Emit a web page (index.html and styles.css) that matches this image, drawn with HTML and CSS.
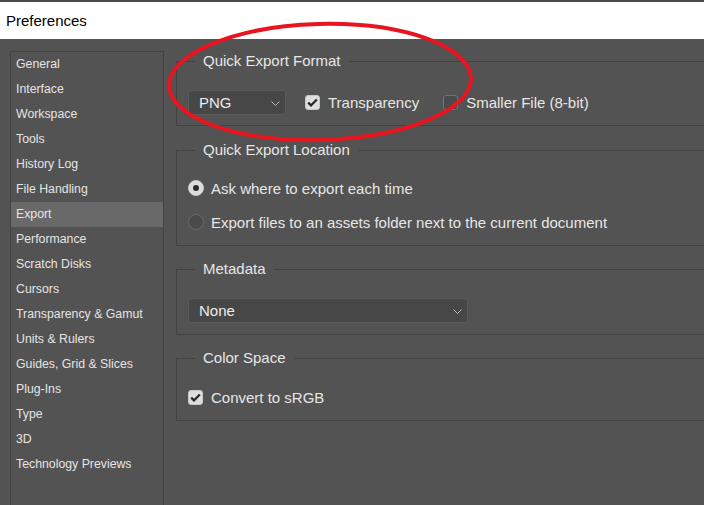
FILE: index.html
```html
<!DOCTYPE html>
<html>
<head>
<meta charset="utf-8">
<link rel="stylesheet" href="styles.css">
</head>
<body>
<div class="titlebar">Preferences</div>
<div class="main">
  <ul class="sidebar">
    <li>General</li>
    <li>Interface</li>
    <li>Workspace</li>
    <li>Tools</li>
    <li>History Log</li>
    <li>File Handling</li>
    <li class="active">Export</li>
    <li>Performance</li>
    <li>Scratch Disks</li>
    <li>Cursors</li>
    <li>Transparency &amp; Gamut</li>
    <li>Units &amp; Rulers</li>
    <li>Guides, Grid &amp; Slices</li>
    <li>Plug-Ins</li>
    <li>Type</li>
    <li>3D</li>
    <li>Technology Previews</li>
  </ul>
  <div class="content">
    <fieldset class="group g1">
      <legend>Quick Export Format</legend>
      <div class="row">
        <div class="select small"><span>PNG</span><svg class="chev" width="9" height="5" viewBox="0 0 9 5"><path d="M0.5 0.5 L4.5 4.5 L8.5 0.5" fill="none" stroke="#b8b8b8" stroke-width="1"/></svg></div>
        <label class="check"><span class="box on"><svg width="11" height="9" viewBox="0 0 11 9"><path d="M1.2 4.6 L4 7.4 L9.8 1.4" fill="none" stroke="#262626" stroke-width="2.2"/></svg></span>Transparency</label>
        <label class="check"><span class="box"></span>Smaller File (8-bit)</label>
      </div>
    </fieldset>
    <fieldset class="group g2">
      <legend>Quick Export Location</legend>
      <label class="radio"><span class="dot on"></span>Ask where to export each time</label>
      <label class="radio second"><span class="dot"></span>Export files to an assets folder next to the current document</label>
    </fieldset>
    <fieldset class="group g3">
      <legend>Metadata</legend>
      <div class="select wide"><span>None</span><svg class="chev" width="9" height="5" viewBox="0 0 9 5"><path d="M0.5 0.5 L4.5 4.5 L8.5 0.5" fill="none" stroke="#b8b8b8" stroke-width="1"/></svg></div>
    </fieldset>
    <fieldset class="group g4">
      <legend>Color Space</legend>
      <label class="check"><span class="box on"><svg width="11" height="9" viewBox="0 0 11 9"><path d="M1.2 4.6 L4 7.4 L9.8 1.4" fill="none" stroke="#262626" stroke-width="2.2"/></svg></span>Convert to sRGB</label>
    </fieldset>
  </div>
</div>
<svg class="annotation" width="704" height="505" viewBox="0 0 704 505">
  <ellipse cx="320" cy="82" rx="151" ry="58" transform="rotate(-1.5 320 82)" fill="none" stroke="#e8141f" stroke-width="4"/>
</svg>
</body>
</html>
```
FILE: styles.css
```css
html, body {
  margin: 0;
  padding: 0;
  overflow: hidden;
  width: 704px;
  height: 505px;
}
body {
  background: #535353;
  font-family: "Liberation Sans", Arial, sans-serif;
  color: #e6e6e6;
  position: relative;
  border-top: 2px solid #4a4a4a;
  box-sizing: border-box;
}
.titlebar {
  background: #ffffff;
  color: #000;
  height: 37px;
  line-height: 37px;
  padding-left: 6px;
  font-size: 15px;
}
.main {
  display: flex;
  padding: 12px 0 0 10px;
}
.sidebar {
  list-style: none;
  margin: 0;
  padding: 0;
  width: 152px;
  height: 480px;
  border: 1px solid #434343;
  border-bottom: none;
  flex: none;
}
.sidebar li {
  height: 25px;
  line-height: 25px;
  padding-left: 5px;
  font-size: 12.3px;
  color: #e4e4e4;
}
.sidebar li.active {
  background: #696969;
}
.content {
  flex: 1;
  margin-left: 12px;
  margin-right: -30px;
  display: flex;
  flex-direction: column;
}
.group {
  border: 1px solid #424242;
  margin: 0;
  padding: 0 11px;
  min-width: 0;
}
.group legend {
  font-size: 15px;
  line-height: 18px;
  margin-left: 7px;
  padding: 0 8px;
  color: #e6e6e6;
}
.g1 { margin-top: 1px; padding-top: 20px; padding-bottom: 10px; }
.g2 { margin-top: 15px; padding-top: 19px; padding-bottom: 13px; }
.g3 { margin-top: 14px; padding-top: 20px; padding-bottom: 11px; }
.g4 { margin-top: 14px; padding-top: 20px; padding-bottom: 13px; }
.row {
  display: flex;
  align-items: center;
  height: 25px;
}
.select {
  box-sizing: border-box;
  height: 25px;
  background: #474747;
  border: 1px solid #5b5b5b;
  border-radius: 3px;
  display: flex;
  align-items: center;
  justify-content: space-between;
  padding: 0 5px 0 10px;
  font-size: 15px;
  color: #ececec;
}
.select.small { width: 98px; margin-right: 19px; }
.select.wide { width: 280px; }
.chev { margin-top: 2px; }
.check {
  display: flex;
  align-items: center;
  font-size: 15px;
  height: 20px;
  margin-right: 24px;
}
.box {
  box-sizing: border-box;
  width: 15px;
  height: 15px;
  border-radius: 3px;
  border: 1.5px solid #737373;
  background: #4b4b4b;
  margin-right: 8px;
  display: flex;
  align-items: center;
  justify-content: center;
}
.box.on {
  background: #dedede;
  border-color: #c8c8c8;
}
.radio {
  display: flex;
  align-items: center;
  height: 20px;
  font-size: 15px;
}
.radio.second { margin-top: 14px; }
.dot {
  box-sizing: border-box;
  width: 16px;
  height: 16px;
  border-radius: 50%;
  border: 1.5px solid #6a6a6a;
  background: #4b4b4b;
  margin-right: 7px;
  display: flex;
  align-items: center;
  justify-content: center;
}
.dot.on {
  background: #dddddd;
  border-color: #cfcfcf;
}
.dot.on::after {
  content: "";
  width: 6px;
  height: 6px;
  border-radius: 50%;
  background: #2a2a2a;
}
.annotation {
  position: absolute;
  left: 0;
  top: -2px;
  pointer-events: none;
}
```
